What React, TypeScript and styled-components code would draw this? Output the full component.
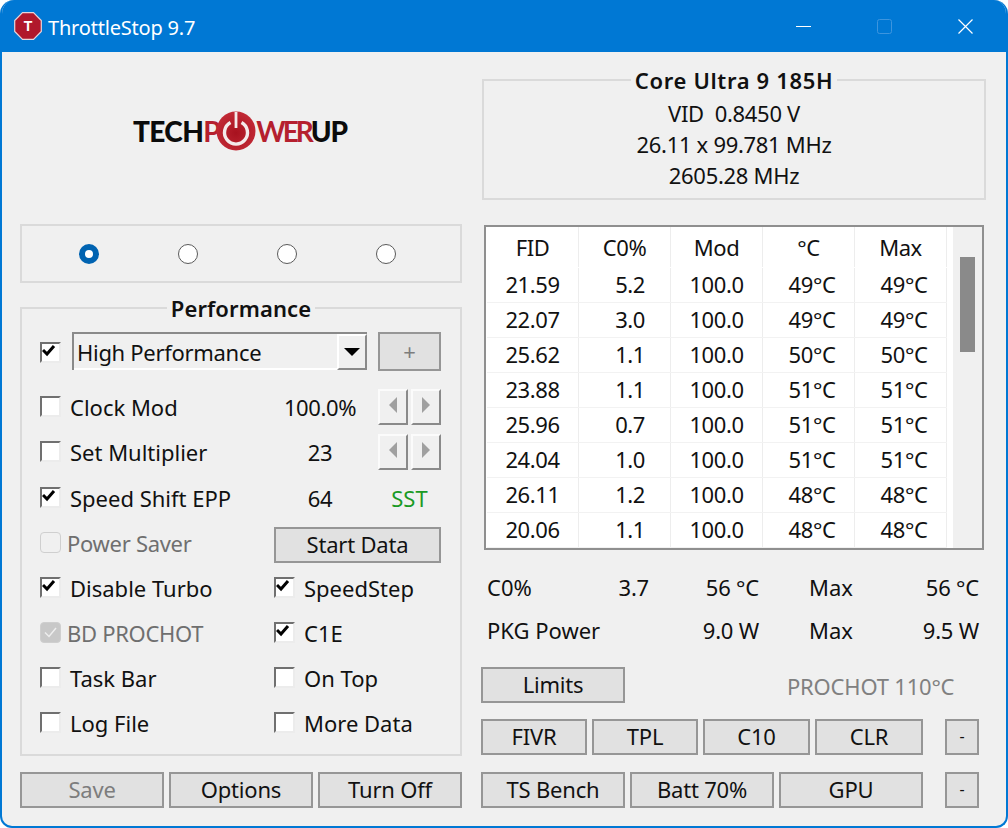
import React, { FC } from 'react';
import styled, { createGlobalStyle } from 'styled-components';

const GlobalStyle = createGlobalStyle`
  html, body {
    margin: 0;
    padding: 0;
    background: #fff;
  }
  * {
    box-sizing: border-box;
  }
`;

const Window = styled('div')`
  width: 1008px;
  height: 828px;
  display: flex;
  flex-direction: column;
  overflow: hidden;
  background: #f0f0f0;
  border: 2px solid #0078d4;
  border-top: none;
  border-radius: 14px 14px 12px 12px;
  color: #111;
  font-family: 'Noto Sans', 'Liberation Sans', sans-serif;
  font-size: 22px;
  line-height: 30px;
`;

const TitleBar = styled('div')`
  flex: none;
  height: 52px;
  margin: 0 -2px;
  padding-left: 14px;
  display: flex;
  align-items: center;
  background: #0078d4;
  color: #fff;
`;

const TitleText = styled('span')`
  margin: 3px 0 0 6px;
  font-size: 20px;
  letter-spacing: -0.2px;
`;

const WindowControls = styled('div')`
  margin-left: auto;
  display: flex;
  align-items: center;
  padding-right: 35px;
  gap: 66px;
`;

const Content = styled('div')`
  flex: 1;
  display: flex;
  padding: 0 0 18px 18px;
`;

const LeftColumn = styled('div')`
  width: 442px;
  display: flex;
  flex-direction: column;
`;

const RightColumn = styled('div')`
  width: 505px;
  margin-left: 19px;
  padding-top: 13px;
  display: flex;
  flex-direction: column;
`;

const LogoArea = styled('div')`
  flex: none;
  height: 172px;
  display: flex;
  align-items: center;
  justify-content: flex-start;
  padding: 0 0 14px 113px;
`;

const LogoText = styled('span')<{ $red?: boolean; $track: number }>`
  font-family: Lato, 'Liberation Sans', sans-serif;
  font-weight: ${props => (props.$red ? 700 : 900)};
  font-size: 28px;
  letter-spacing: ${props => props.$track}px;
  color: ${props => (props.$red ? '#b5202e' : '#0b0b0b')};
`;

const RadioBox = styled('div')`
  flex: none;
  height: 59px;
  display: flex;
  align-items: center;
  padding-left: 57px;
  gap: 79px;
  border: 2px solid #dadada;
`;

const Radio = styled('span')<{ $on?: boolean }>`
  width: 20px;
  height: 20px;
  border-radius: 50%;
  background: #fff;
  border: ${props => (props.$on ? '6px solid #0063b1' : '1px solid #5a5a5a')};
`;

const Group = styled('fieldset')`
  margin: 0;
  padding: 0;
  min-width: 0;
  border: 2px solid #dadada;
`;

const GroupTitle = styled('legend')<{ $wide?: boolean }>`
  margin: 0 auto;
  padding: 0 4px;
  font-weight: 600;
  line-height: 30px;
  letter-spacing: ${props => (props.$wide ? '0.65px' : '0.1px')};
`;

const PerformanceGroup = styled(Group)`
  margin-top: 10px;
  padding-bottom: 8px;
`;

const GroupRows = styled('div')`
  padding-left: 18px;
`;

const ComboRow = styled('div')`
  height: 63px;
  padding-top: 9px;
  display: flex;
  align-items: flex-start;
`;

const Combo = styled('div')`
  width: 295px;
  height: 38px;
  margin-left: 11px;
  padding-left: 3px;
  display: flex;
  align-items: center;
  justify-content: space-between;
  background: #f0f0f0;
  border: solid #8a8a8a;
  border-width: 2px 0 0 2px;
  box-shadow: inset 0 -2px 0 #fff;
`;

const ComboText = styled('span')`
  letter-spacing: -0.3px;
`;

const ComboArrow = styled('span')`
  width: 30px;
  height: 36px;
  display: flex;
  align-items: center;
  justify-content: center;
  background: #f0f0f0;
  border: 2px solid;
  border-color: #fff #8a8a8a #8a8a8a #fff;
  &::before {
    content: '';
    border-left: 8px solid transparent;
    border-right: 8px solid transparent;
    border-top: 8px solid #000;
  }
`;

const Row = styled('div')<{ $lift?: boolean }>`
  height: 45px;
  padding-bottom: ${props => (props.$lift ? '4px' : '2px')};
  display: grid;
  grid-template-columns: 231px 98px 72px;
  align-items: center;
`;

const TwoCol = styled(Row)`
  grid-template-columns: 234px 167px;
`;

const Check = styled('label')<{ $muted?: boolean }>`
  display: flex;
  align-items: center;
  color: ${props => (props.$muted ? '#6f6f6f' : 'inherit')};
  letter-spacing: ${props => (props.$muted ? '-0.3px' : '0')};
`;

const CheckLabel = styled('span')<{ $tight?: boolean }>`
  margin-left: ${props => (props.$tight ? '6px' : '9px')};
`;

const Box = styled('span')<{ $disabled?: boolean; $on?: boolean }>`
  flex: none;
  width: 21px;
  height: 21px;
  margin-top: -1px;
  display: flex;
  align-items: flex-start;
  justify-content: flex-start;
  background: ${props =>
    props.$disabled ? (props.$on ? '#c8c8c8' : '#f0f0f0') : '#fff'};
  border: ${props => (props.$disabled ? '1px solid #cfcfcf' : '2px solid')};
  border-radius: ${props => (props.$disabled ? '4px' : '0')};
  border-color: ${props =>
    props.$disabled ? '#cfcfcf' : '#707070 #ececec #ececec #707070'};
`;

const ComboBox = styled(Box)`
  margin-top: 10px;
`;

const Value = styled('span')`
  text-align: center;
  letter-spacing: -0.4px;
`;

const Green = styled('span')`
  justify-self: end;
  width: 63px;
  text-align: center;
  color: #1a9a24;
`;

const SpinPair = styled('div')`
  justify-self: end;
  width: 63px;
  display: flex;
  justify-content: space-between;
`;

const SpinButton = styled('span')<{ $right?: boolean }>`
  width: 30px;
  height: 36px;
  display: flex;
  align-items: center;
  justify-content: center;
  background: #f0f0f0;
  border: 2px solid;
  border-color: #fbfbfb #8a8a8a #8a8a8a #fbfbfb;
  &::before {
    content: '';
    margin-top: -3px;
    border-top: 8px solid transparent;
    border-bottom: 8px solid transparent;
    ${props =>
      props.$right
        ? 'border-left: 8px solid #a0a0a0;'
        : 'border-right: 8px solid #a0a0a0;'}
  }
`;

const Button = styled('button')<{ $w: number; $h?: number; $muted?: boolean }>`
  flex: none;
  width: ${props => props.$w}px;
  height: ${props => props.$h || 36}px;
  padding: 0 0 2px;
  background: #e1e1e1;
  border: 2px solid #969696;
  border-radius: 0;
  font-family: inherit;
  font-size: 22px;
  line-height: 28px;
  letter-spacing: -0.2px;
  color: ${props => (props.$muted ? '#7d7d7d' : '#111')};
`;

const PlusButton = styled(Button)`
  margin-left: 11px;
`;

const StartButton = styled(Button)`
  margin-top: 5px;
`;

const ButtonRow = styled('div')<{ $top?: number }>`
  display: flex;
  gap: 5px;
  margin-top: ${props => props.$top || 0}px;
`;

const DashButton = styled(Button)`
  margin-left: 17px;
  font-size: 16px;
`;

const CpuGroup = styled(Group)`
  flex: none;
  padding: 3px 0 7px;
  text-align: center;
  margin-left: 1px;
`;

const CpuLine = styled('div')`
  height: 31px;
  line-height: 31px;
  letter-spacing: -0.3px;
`;

const ListBox = styled('div')`
  flex: none;
  width: 500px;
  height: 325px;
  margin: 25px 0 0 3px;
  display: flex;
  background: #fff;
  border: 2px solid #8f8f8f;
`;

const Table = styled('div')`
  width: 461px;
  padding-left: 1px;
`;

const TableRow = styled('div')<{ $head?: boolean }>`
  height: ${props => (props.$head ? '41px' : '35px')};
  display: grid;
  grid-template-columns: repeat(5, 92px);
  border-bottom: 1px solid ${props => (props.$head ? '#fff' : '#f2f2f2')};
`;

const Cell = styled('div')<{ $right?: boolean; $shift?: boolean }>`
  display: flex;
  align-items: center;
  justify-content: ${props => (props.$right ? 'flex-end' : 'center')};
  padding: 0 ${props => (props.$right ? '25px' : '0')} 2px
    ${props => (props.$shift ? '7px' : '0')};
  border-right: 1px solid #ededed;
  letter-spacing: -0.4px;
`;

const HeadCell = styled(Cell)`
  padding-bottom: 0;
`;

const ScrollGutter = styled('div')`
  flex: 1;
  margin-left: 6px;
  padding: 30px 0 0 7px;
  background: #f0f0f0;
`;

const ScrollThumb = styled('div')`
  width: 15px;
  height: 95px;
  background: #8a8a8a;
`;

const Stats = styled('div')`
  margin-top: 15px;
  padding-left: 6px;
  display: grid;
  grid-template-columns: 110px 52px 110px 110px 110px;
  grid-auto-rows: 43px;
  align-items: center;
`;

const StatName = styled('span')<{ $span?: boolean }>`
  grid-column: ${props => (props.$span ? 'span 2' : 'auto')};
`;

const StatValue = styled('span')`
  text-align: right;
  letter-spacing: -0.2px;
`;

const StatMax = styled('span')`
  padding-left: 50px;
`;

const LimitsRow = styled('div')`
  margin-top: 16px;
  display: flex;
  align-items: center;
`;

const Prochot = styled('span')`
  margin-left: 162px;
  margin-top: 1px;
  color: #808080;
  letter-spacing: -0.2px;
`;

const CheckMark: FC = () => (
  <svg width="15" height="13" viewBox="0 0 15 13">
    <path d="M1 6 L5 10 L12 2" fill="none" stroke="#000" strokeWidth="3" />
  </svg>
);

const MutedMark: FC = () => (
  <svg width="19" height="19" viewBox="0 0 19 19">
    <path d="M4 9.5 L8 13.5 L15 5" fill="none" stroke="#eee" strokeWidth="1.5" />
  </svg>
);

const CheckItem: FC<{
  label: string;
  on?: boolean;
  disabled?: boolean;
}> = ({ label, on, disabled }) => (
  <Check $muted={disabled}>
    <Box $on={on} $disabled={disabled}>
      {on && !disabled && <CheckMark />}
      {on && disabled && <MutedMark />}
    </Box>
    <CheckLabel $tight={disabled}>{label}</CheckLabel>
  </Check>
);

const StopIcon: FC = () => (
  <svg width="28" height="28" viewBox="0 0 28 28">
    <polygon
      points="8.5,0.7 19.5,0.7 27.3,8.5 27.3,19.5 19.5,27.3 8.5,27.3 0.7,19.5 0.7,8.5"
      fill="#b0182c"
      stroke="#e8d5da"
      strokeWidth="1.2"
    />
    <text
      x="14"
      y="19"
      textAnchor="middle"
      fill="#fff"
      fontFamily="'Liberation Sans', sans-serif"
      fontWeight="700"
      fontSize="14"
    >
      T
    </text>
  </svg>
);

const PowerGlyph = styled('svg')`
  flex: none;
  margin: 0 0 0 -4px;
`;

const PowerIcon: FC = () => (
  <PowerGlyph width="40" height="40" viewBox="0 0 40 40">
    <defs>
      <radialGradient id="powerRed" cx="50%" cy="55%" r="55%">
        <stop offset="0%" stopColor="#a8121f" />
        <stop offset="100%" stopColor="#c22a36" />
      </radialGradient>
    </defs>
    <circle cx="20" cy="20" r="19.5" fill="url(#powerRed)" />
    <path
      d="M14.5 11.5 A11.5 11.5 0 1 0 25.5 11.5"
      fill="none"
      stroke="#f4eaea"
      strokeWidth="3.4"
    />
    <rect x="18.6" y="1" width="2.8" height="16" fill="#f4eaea" />
  </PowerGlyph>
);

const CaptionButtons: FC = () => (
  <WindowControls>
    <svg width="15" height="15" viewBox="0 0 15 15">
      <rect x="0" y="7" width="15" height="1" fill="#fff" />
    </svg>
    <svg width="15" height="15" viewBox="0 0 15 15">
      <rect x="0.5" y="0.5" width="14" height="14" rx="2" fill="none" stroke="#3d95de" />
    </svg>
    <svg width="15" height="15" viewBox="0 0 15 15">
      <path d="M0.5 0.5 L14.5 14.5 M14.5 0.5 L0.5 14.5" stroke="#fff" strokeWidth="1.2" />
    </svg>
  </WindowControls>
);

const columns = ['FID', 'C0%', 'Mod', '°C', 'Max'];
const rows = [
  ['21.59', '5.2', '100.0', '49°C', '49°C'],
  ['22.07', '3.0', '100.0', '49°C', '49°C'],
  ['25.62', '1.1', '100.0', '50°C', '50°C'],
  ['23.88', '1.1', '100.0', '51°C', '51°C'],
  ['25.96', '0.7', '100.0', '51°C', '51°C'],
  ['24.04', '1.0', '100.0', '51°C', '51°C'],
  ['26.11', '1.2', '100.0', '48°C', '48°C'],
  ['20.06', '1.1', '100.0', '48°C', '48°C'],
];

const App: FC = () => {
  return (
    <Window>
      <GlobalStyle />
      <TitleBar>
        <StopIcon />
        <TitleText>ThrottleStop 9.7</TitleText>
        <CaptionButtons />
      </TitleBar>
      <Content>
        <LeftColumn>
          <LogoArea>
            <LogoText $track={-0.6}>TECH</LogoText>
            <LogoText $red $track={-0.4}>
              P
            </LogoText>
            <PowerIcon />
            <LogoText $red $track={-3}>
              WER
            </LogoText>
            <LogoText $track={-1.2}>UP</LogoText>
          </LogoArea>
          <RadioBox>
            <Radio $on />
            <Radio />
            <Radio />
            <Radio />
          </RadioBox>
          <PerformanceGroup>
            <GroupTitle>Performance</GroupTitle>
            <GroupRows>
              <ComboRow>
                <ComboBox $on>
                  <CheckMark />
                </ComboBox>
                <Combo>
                  <ComboText>High Performance</ComboText>
                  <ComboArrow />
                </Combo>
                <PlusButton $w={63} $h={39} $muted>
                  +
                </PlusButton>
              </ComboRow>
              <Row $lift>
                <CheckItem label="Clock Mod" />
                <Value>100.0%</Value>
                <SpinPair>
                  <SpinButton />
                  <SpinButton $right />
                </SpinPair>
              </Row>
              <Row $lift>
                <CheckItem label="Set Multiplier" />
                <Value>23</Value>
                <SpinPair>
                  <SpinButton />
                  <SpinButton $right />
                </SpinPair>
              </Row>
              <Row>
                <CheckItem label="Speed Shift EPP" on />
                <Value>64</Value>
                <Green>SST</Green>
              </Row>
              <TwoCol>
                <CheckItem label="Power Saver" disabled />
                <StartButton $w={167}>Start Data</StartButton>
              </TwoCol>
              <TwoCol>
                <CheckItem label="Disable Turbo" on />
                <CheckItem label="SpeedStep" on />
              </TwoCol>
              <TwoCol>
                <CheckItem label="BD PROCHOT" on disabled />
                <CheckItem label="C1E" on />
              </TwoCol>
              <TwoCol>
                <CheckItem label="Task Bar" />
                <CheckItem label="On Top" />
              </TwoCol>
              <TwoCol>
                <CheckItem label="Log File" />
                <CheckItem label="More Data" />
              </TwoCol>
            </GroupRows>
          </PerformanceGroup>
          <ButtonRow $top={16}>
            <Button $w={144} $muted>
              Save
            </Button>
            <Button $w={144}>Options</Button>
            <Button $w={144}>Turn Off</Button>
          </ButtonRow>
        </LeftColumn>
        <RightColumn>
          <CpuGroup>
            <GroupTitle $wide>Core Ultra 9 185H</GroupTitle>
            <CpuLine>VID&nbsp; 0.8450 V</CpuLine>
            <CpuLine>26.11 x 99.781 MHz</CpuLine>
            <CpuLine>2605.28 MHz</CpuLine>
          </CpuGroup>
          <ListBox>
            <Table>
              <TableRow $head>
                {columns.map(col => (
                  <HeadCell key={col}>{col}</HeadCell>
                ))}
              </TableRow>
              {rows.map((row, index) => (
                <TableRow key={`row${index}`}>
                  {row.map((val, i) => (
                    <Cell key={i} $right={i === 1} $shift={i >= 3}>
                      {val}
                    </Cell>
                  ))}
                </TableRow>
              ))}
            </Table>
            <ScrollGutter>
              <ScrollThumb />
            </ScrollGutter>
          </ListBox>
          <Stats>
            <StatName>C0%</StatName>
            <StatValue>3.7</StatValue>
            <StatValue>56 °C</StatValue>
            <StatMax>Max</StatMax>
            <StatValue>56 °C</StatValue>
            <StatName $span>PKG Power</StatName>
            <StatValue>9.0 W</StatValue>
            <StatMax>Max</StatMax>
            <StatValue>9.5 W</StatValue>
          </Stats>
          <LimitsRow>
            <Button $w={144}>Limits</Button>
            <Prochot>PROCHOT 110°C</Prochot>
          </LimitsRow>
          <ButtonRow $top={16}>
            <Button $w={106}>FIVR</Button>
            <Button $w={106}>TPL</Button>
            <Button $w={107}>C10</Button>
            <Button $w={108}>CLR</Button>
            <DashButton $w={34}>-</DashButton>
          </ButtonRow>
          <ButtonRow $top={17}>
            <Button $w={144}>TS Bench</Button>
            <Button $w={144}>Batt 70%</Button>
            <Button $w={144}>GPU</Button>
            <DashButton $w={34}>-</DashButton>
          </ButtonRow>
        </RightColumn>
      </Content>
    </Window>
  );
};

export default App;
